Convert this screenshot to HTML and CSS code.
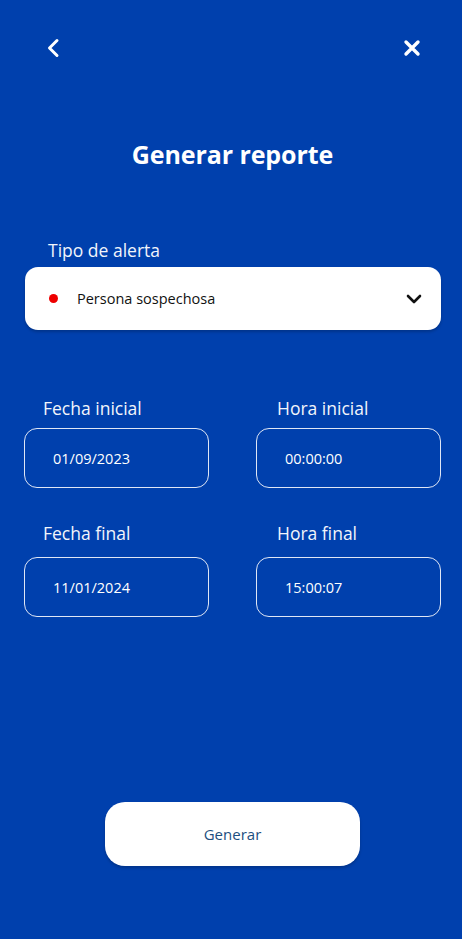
FILE: index.html
```html
<!DOCTYPE html>
<html lang="es">
<head>
<meta charset="utf-8">
<title>Generar reporte</title>
<link rel="stylesheet" href="styles.css">
</head>
<body>
<div class="screen">
  <header class="topbar">
    <button class="icon-btn" aria-label="Atrás">
      <svg width="14" height="20" viewBox="0 0 14 20"><path d="M11 2.5 L3.5 10 L11 17.5" fill="none" stroke="#fff" stroke-width="3" stroke-linecap="round" stroke-linejoin="round"/></svg>
    </button>
    <button class="icon-btn" aria-label="Cerrar">
      <svg width="18" height="18" viewBox="0 0 18 18"><path d="M3 3 L15 15 M15 3 L3 15" fill="none" stroke="#fff" stroke-width="3.4" stroke-linecap="round"/></svg>
    </button>
  </header>

  <h1 class="title">Generar reporte</h1>

  <section class="alert-section">
    <label class="label alert-label">Tipo de alerta</label>
    <div class="select">
      <span class="dot"></span>
      <span class="select-text">Persona sospechosa</span>
      <svg class="chev" width="16" height="10" viewBox="0 0 16 10"><path d="M2 2 L8 8 L14 2" fill="none" stroke="#111" stroke-width="2.6" stroke-linecap="round" stroke-linejoin="round"/></svg>
    </div>
  </section>

  <section class="grid">
    <div class="field">
      <label class="label field-label left">Fecha inicial</label>
      <div class="box">01/09/2023</div>
    </div>
    <div class="field">
      <label class="label field-label right">Hora inicial</label>
      <div class="box">00:00:00</div>
    </div>
    <div class="field">
      <label class="label field-label left">Fecha final</label>
      <div class="box">11/01/2024</div>
    </div>
    <div class="field">
      <label class="label field-label right">Hora final</label>
      <div class="box">15:00:07</div>
    </div>
  </section>

  <div class="actions">
    <button class="primary">Generar</button>
  </div>
</div>
</body>
</html>
```
FILE: styles.css
```css
* { box-sizing: border-box; }
html, body {
  margin: 0;
  padding: 0;
  background: #0040ad;
  font-family: "Open Sans", "Noto Sans", sans-serif;
  color: #fff;
}
.screen {
  width: 462px;
  height: 939px;
  display: flex;
  flex-direction: column;
  padding: 0 21px 0 24px;
}
.topbar {
  display: flex;
  justify-content: space-between;
  align-items: center;
  padding: 38px 18px 0 18px;
  height: 58px;
}
.icon-btn {
  background: none;
  border: 0;
  padding: 0;
  display: flex;
  align-items: center;
  justify-content: center;
  width: 22px;
  height: 22px;
}
.title {
  margin: 78px 0 0;
  text-align: center;
  font-size: 25px;
  font-weight: 700;
  line-height: 36px;
  letter-spacing: -0.1px;
}
.label {
  display: block;
  font-size: 17.5px;
  line-height: 24px;
  font-weight: 400;
  color: #f2f5fb;
}
.alert-section {
  margin-top: 66px;
}
.alert-label {
  padding-left: 24px;
}
.select {
  margin-top: 5px;
  margin-left: 1px;
  height: 63px;
  background: #fff;
  border-radius: 13px;
  display: flex;
  align-items: center;
  padding: 0 19px 0 24px;
  box-shadow: 0 2px 3px rgba(0, 0, 0, 0.2);
}
.dot {
  width: 9px;
  height: 9px;
  border-radius: 50%;
  background: #ee0000;
  flex: none;
}
.select-text {
  margin-left: 19px;
  flex: 1;
  color: #111;
  font-size: 14.5px;
}
.grid {
  margin-top: 66px;
  display: grid;
  grid-template-columns: 185px 185px;
  column-gap: 47px;
  row-gap: 33px;
}
.field-label {
  margin-bottom: 8px;
}
.field-label.left { padding-left: 19px; }
.field-label.right { padding-left: 21px; }
.grid .field:nth-child(n+3) .field-label {
  margin-bottom: 12px;
}
.box {
  height: 60px;
  border: 1.5px solid #dfe6f5;
  border-radius: 13px;
  display: flex;
  align-items: center;
  padding-left: 28px;
  font-size: 14.5px;
  color: #fff;
}
.actions {
  margin-top: auto;
  margin-bottom: 73px;
  display: flex;
  justify-content: center;
}
.primary {
  width: 255px;
  height: 64px;
  background: #fff;
  border: 0;
  border-radius: 20px;
  color: #1d4f80;
  font-family: "Open Sans", "Noto Sans", sans-serif;
  font-size: 15px;
  box-shadow: 0 2px 3px rgba(0, 0, 0, 0.2);
}
```
